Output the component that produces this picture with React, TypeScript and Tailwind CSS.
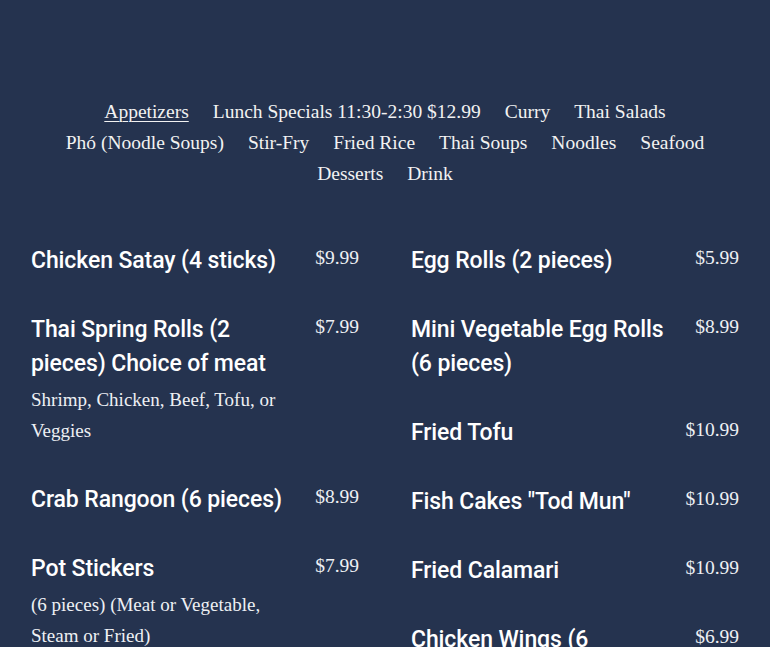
import React from "react";

const serif = "font-['Liberation_Serif','Times_New_Roman',serif]";
const sans = "font-['Roboto','Liberation_Sans',sans-serif]";

const categories = [
  "Appetizers",
  "Lunch Specials 11:30-2:30 $12.99",
  "Curry",
  "Thai Salads",
  "Phó (Noodle Soups)",
  "Stir-Fry",
  "Fried Rice",
  "Thai Soups",
  "Noodles",
  "Seafood",
  "Desserts",
  "Drink",
];

type Item = { name: string; price: string; desc?: string };

const left: Item[] = [
  { name: "Chicken Satay (4 sticks)", price: "$9.99" },
  {
    name: "Thai Spring Rolls (2 pieces) Choice of meat",
    price: "$7.99",
    desc: "Shrimp, Chicken, Beef, Tofu, or Veggies",
  },
  { name: "Crab Rangoon (6 pieces)", price: "$8.99" },
  {
    name: "Pot Stickers",
    price: "$7.99",
    desc: "(6 pieces) (Meat or Vegetable, Steam or Fried)",
  },
];

const right: Item[] = [
  { name: "Egg Rolls (2 pieces)", price: "$5.99" },
  { name: "Mini Vegetable Egg Rolls (6 pieces)", price: "$8.99" },
  { name: "Fried Tofu", price: "$10.99" },
  { name: 'Fish Cakes "Tod Mun"', price: "$10.99" },
  { name: "Fried Calamari", price: "$10.99" },
  { name: "Chicken Wings (6\npieces)", price: "$6.99" },
];

function MenuItem({ item }: { item: Item }) {
  return (
    <div className="flex items-start gap-4">
      <div className="flex-1">
        <h3 className={`${sans} whitespace-pre-line text-[23px] leading-[34px] font-medium text-white tracking-[-0.1px]`}>
          {item.name}
        </h3>
        {item.desc && (
          <p className={`${serif} text-[19px] leading-[31px] text-[#eef0f4] mt-[3px] mb-[2px]`}>{item.desc}</p>
        )}
      </div>
      <span className={`${serif} shrink-0 text-[19.5px] leading-[28px] text-[#eef0f4]`}>{item.price}</span>
    </div>
  );
}

export default function App() {
  return (
    <div className="min-h-screen bg-[#25334f] overflow-hidden">
      <nav className={`${serif} pt-[96px] px-[50px] text-[19.5px] leading-[31px] text-[#f2f2f2] flex flex-wrap justify-center gap-x-[24px]`}>
        {categories.map((c, i) => (
          <a key={c} className={i === 0 ? "underline underline-offset-[3px] decoration-1" : ""}>
            {c}
          </a>
        ))}
      </nav>
      <div className="grid grid-cols-2 gap-x-[52px] px-[31px] pt-[55px]">
        <div className="flex flex-col gap-[35px]">
          {left.map((it) => (
            <MenuItem key={it.name} item={it} />
          ))}
        </div>
        <div className="flex flex-col gap-[35px]">
          {right.map((it) => (
            <MenuItem key={it.name} item={it} />
          ))}
        </div>
      </div>
    </div>
  );
}
